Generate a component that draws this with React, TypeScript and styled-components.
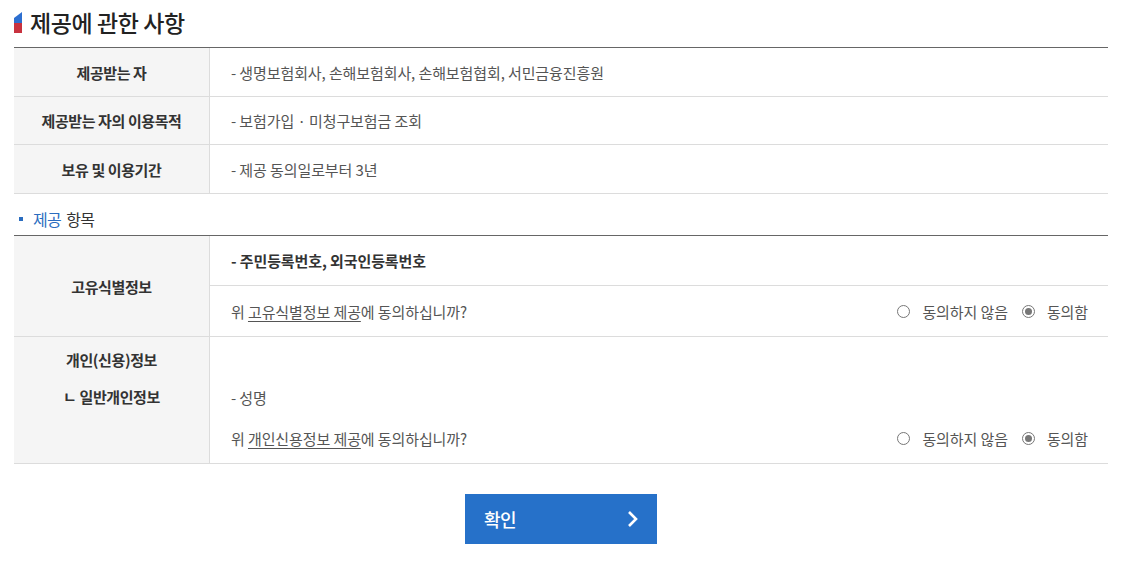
import { createGlobalStyle, styled } from "styled-components";

const GlobalStyle = createGlobalStyle`
  body {
    margin: 0;
    background: #fff;
    font-family: "Noto Sans CJK KR", "Noto Sans", sans-serif;
    color: #555;
  }
`;

const Page = styled.div`
  width: 1094px;
  padding: 4px 0 0 14px;
`;

const Title = styled.h2`
  margin: 0 0 7px;
  display: flex;
  align-items: center;
  gap: 8px;
  height: 36px;
  font-size: 23px;
  font-weight: 500;
  letter-spacing: -0.4px;
  color: #222;
`;

const SubTitle = styled.h3`
  margin: 0;
  box-sizing: border-box;
  height: 41px;
  padding: 9px 0 0 5px;
  display: flex;
  align-items: center;
  gap: 10px;
  font-size: 16px;
  font-weight: 400;
  letter-spacing: -0.6px;
  color: #333;
  &::before {
    content: "";
    width: 4px;
    height: 4px;
    background: #2a6cbf;
  }
  em {
    font-style: normal;
    color: #2a6cbf;
    margin-right: 5px;
  }
`;

const Table = styled.div`
  display: grid;
  grid-template-columns: 196px 1fr;
  border-top: 1px solid #666;
`;

const Head = styled.div<{ $span?: number; $top?: boolean }>`
  grid-row: span ${({ $span }) => $span || 1};
  background: #f5f5f5;
  border-right: 1px solid #dcdcdc;
  border-bottom: 1px solid #dcdcdc;
  display: flex;
  flex-direction: column;
  align-items: center;
  justify-content: ${({ $top }) => ($top ? "flex-start" : "center")};
  padding-top: ${({ $top }) => ($top ? "4px" : "0")};
  font-size: 15px;
  font-weight: 700;
  letter-spacing: -0.4px;
  color: #333;
  line-height: 37px;
`;

const Cell = styled.div<{ $h?: number; $bold?: boolean }>`
  min-height: ${({ $h }) => $h || 48}px;
  border-bottom: 1px solid #dcdcdc;
  padding: 0 20px 0 21px;
  display: flex;
  align-items: center;
  font-size: 15px;
  font-weight: ${({ $bold }) => ($bold ? 700 : 400)};
  letter-spacing: -0.1px;
  color: ${({ $bold }) => ($bold ? "#333" : "#555")};
`;

const StackCell = styled(Cell)`
  flex-direction: column;
  align-items: stretch;
  justify-content: flex-end;
  padding-bottom: 13px;
`;

const Line = styled.div`
  display: flex;
  align-items: center;
  justify-content: space-between;
  height: 24px;
  & + & {
    margin-top: 17px;
  }
`;

const Question = styled.span`
  u {
    text-underline-offset: 3px;
  }
`;

const Radios = styled.div`
  display: flex;
  align-items: center;
  gap: 14px;
  font-size: 15px;
  color: #555;
`;

const RadioLabel = styled.label`
  display: flex;
  align-items: center;
  gap: 12px;
`;

const Circle = styled.span<{ $on?: boolean }>`
  width: 11px;
  height: 11px;
  border: 1px solid #777;
  border-radius: 50%;
  display: inline-flex;
  align-items: center;
  justify-content: center;
  &::after {
    content: "";
    width: 7px;
    height: 7px;
    border-radius: 50%;
    background: ${({ $on }) => ($on ? "#777" : "transparent")};
  }
`;

const ButtonRow = styled.div`
  display: flex;
  justify-content: center;
  padding-top: 30px;
`;

const Confirm = styled.button`
  width: 192px;
  height: 50px;
  border: none;
  background: #2671c9;
  color: #fff;
  display: flex;
  align-items: center;
  justify-content: space-between;
  padding: 0 18px 0 19px;
  font-family: inherit;
  font-size: 18px;
  font-weight: 500;
  letter-spacing: -0.5px;
  cursor: pointer;
`;

const TitleMark = () => (
  <svg width="8" height="21" viewBox="0 0 8 21">
    <polygon points="0,6 8,0 8,11 0,11" fill="#2d6fd0" />
    <polygon points="0,11 8,11 8,21 0,21" fill="#c8323f" />
  </svg>
);

const Chevron = () => (
  <svg width="12" height="18" viewBox="0 0 12 18">
    <polyline
      points="2,2 9,9 2,16"
      fill="none"
      stroke="#fff"
      strokeWidth="2.6"
    />
  </svg>
);

const Agree = () => (
  <Radios>
    <RadioLabel>
      <Circle />
      동의하지 않음
    </RadioLabel>
    <RadioLabel>
      <Circle $on />
      동의함
    </RadioLabel>
  </Radios>
);

export default function App() {
  return (
    <Page>
      <GlobalStyle />
      <Title>
        <TitleMark />
        제공에 관한 사항
      </Title>
      <Table>
        <Head>제공받는 자</Head>
        <Cell>- 생명보험회사, 손해보험회사, 손해보험협회, 서민금융진흥원</Cell>
        <Head>제공받는 자의 이용목적</Head>
        <Cell $h={47}>- 보험가입 · 미청구보험금 조회</Cell>
        <Head>보유 및 이용기간</Head>
        <Cell>- 제공 동의일로부터 3년</Cell>
      </Table>
      <SubTitle>
        <span>
          <em>제공</em>항목
        </span>
      </SubTitle>
      <Table>
        <Head $span={2}>고유식별정보</Head>
        <Cell $h={49} $bold>
          - 주민등록번호, 외국인등록번호
        </Cell>
        <Cell $h={50}>
          <Line style={{ width: "100%" }}>
            <Question>
              위 <u>고유식별정보 제공</u>에 동의하십니까?
            </Question>
            <Agree />
          </Line>
        </Cell>
        <Head $top>
          <span>개인(신용)정보</span>
          <span>ㄴ 일반개인정보</span>
        </Head>
        <StackCell $h={113}>
          <Line>- 성명</Line>
          <Line>
            <Question>
              위 <u>개인신용정보 제공</u>에 동의하십니까?
            </Question>
            <Agree />
          </Line>
        </StackCell>
      </Table>
      <ButtonRow>
        <Confirm>
          확인
          <Chevron />
        </Confirm>
      </ButtonRow>
    </Page>
  );
}
